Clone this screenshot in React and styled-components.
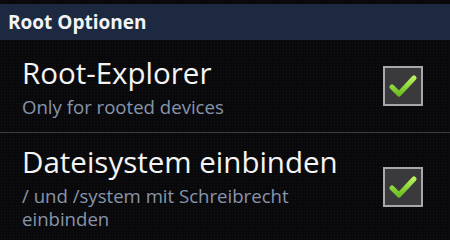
import React from "react";
import styled, { createGlobalStyle } from "styled-components";

const Global = createGlobalStyle`
    html, body {
        margin: 0;
        padding: 0;
        background: #08080b;
        width: 450px;
        height: 240px;
        overflow: hidden;
    }
`

const Screen = styled.div`
    width: 450px;
    height: 240px;
    padding-top: 4px;
    box-sizing: border-box;
    background-color: #09090c;
    background-image: radial-gradient(#141418 0.6px, transparent 0.8px);
    background-size: 3px 3px;
    font-family: "Open Sans", "Noto Sans", sans-serif;
    overflow: hidden;
`

const CategoryHeader = styled.div`
    height: 36px;
    display: flex;
    align-items: center;
    padding-left: 8px;
    background: #1c2940;
    color: #f2f4f7;
    font-weight: 700;
    font-size: 19px;
`

const Row = styled.div`
    display: flex;
    align-items: center;
    height: ${p => p.height}px;
    padding: 0 27px 0 22px;
    border-bottom: ${p => (p.divider ? "1px solid #3a3a3f" : "none")};
`

const Texts = styled.div`
    flex: 1;
    display: flex;
    flex-direction: column;
`

const Title = styled.div`
    color: #f4f4f4;
    font-size: 29.5px;
    line-height: 36px;
`

const Summary = styled.div`
    color: #8795aa;
    font-size: 18.6px;
    line-height: 23px;
    margin-top: 4px;
`

const Box = styled.div`
    width: 36px;
    height: 36px;
    border: 2px solid #a8a8a8;
    background: #3a393b;
    display: flex;
    align-items: center;
    justify-content: center;
    flex-shrink: 0;
`

const Check = () => (
    <svg width="28" height="26" viewBox="0 0 28 26">
        <defs>
            <linearGradient id="g" x1="0" y1="0" x2="0" y2="1">
                <stop offset="0" stopColor="#b6f05a" />
                <stop offset="1" stopColor="#6cbf22" />
            </linearGradient>
        </defs>
        <path d="M3 14 L10 21 L25 5" fill="none" stroke="url(#g)" strokeWidth="5" strokeLinecap="round" strokeLinejoin="round" />
    </svg>
)

const Pref = ({ title, summary, height, divider }) => (
    <Row height={height} divider={divider}>
        <Texts>
            <Title>{title}</Title>
            <Summary>{summary}</Summary>
        </Texts>
        <Box><Check /></Box>
    </Row>
)

export default function App() {
    return (
        <Screen>
            <Global />
            <CategoryHeader>Root Optionen</CategoryHeader>
            <Pref title="Root-Explorer" summary="Only for rooted devices" height={92} divider />
            <Pref title="Dateisystem einbinden" summary={<>/ und /system mit Schreibrecht<br />einbinden</>} height={108} />
        </Screen>
    )
}
